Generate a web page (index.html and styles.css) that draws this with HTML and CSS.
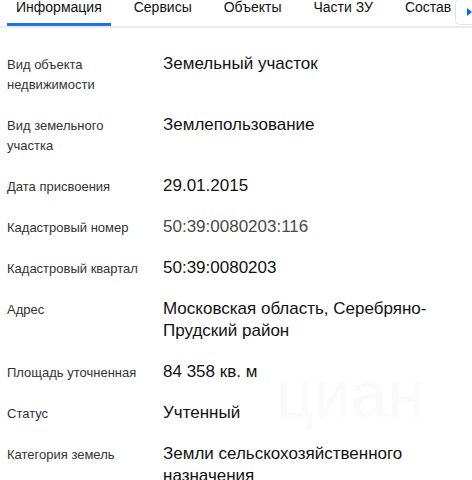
FILE: index.html
```html
<!DOCTYPE html>
<html lang="ru">
<head>
  <meta charset="UTF-8">
  <meta name="viewport" content="width=device-width, initial-scale=1.0">
  <title>Информация об участке</title>
  <link rel="stylesheet" href="styles.css">
</head>
<body>

  <!-- Tabs -->
  <div class="tabs">
    <div class="tab active">Информация</div>
    <div class="tab">Сервисы</div>
    <div class="tab">Объекты</div>
    <div class="tab">Части ЗУ</div>
    <div class="tab">Состав</div>
    <div class="tab-more">
      <svg width="8" height="10" viewBox="0 0 8 10"><path d="M1 1 L6 5 L1 9 Z" fill="#0468ff"/></svg>
    </div>
  </div>

  <!-- Info list -->
  <div class="info">
    <div class="watermark">циан</div>

    <div class="row">
      <div class="label">Вид объекта недвижимости</div>
      <div class="value">Земельный участок</div>
    </div>
    <div class="row">
      <div class="label">Вид земельного участка</div>
      <div class="value">Землепользование</div>
    </div>
    <div class="row">
      <div class="label">Дата присвоения</div>
      <div class="value">29.01.2015</div>
    </div>
    <div class="row">
      <div class="label">Кадастровый номер</div>
      <div class="value muted">50:39:0080203:116</div>
    </div>
    <div class="row">
      <div class="label">Кадастровый квартал</div>
      <div class="value">50:39:0080203</div>
    </div>
    <div class="row">
      <div class="label">Адрес</div>
      <div class="value">Московская область, Серебряно-Прудский район</div>
    </div>
    <div class="row">
      <div class="label">Площадь уточненная</div>
      <div class="value">84 358 кв. м</div>
    </div>
    <div class="row">
      <div class="label">Статус</div>
      <div class="value">Учтенный</div>
    </div>
    <div class="row">
      <div class="label">Категория земель</div>
      <div class="value">Земли сельскохозяйственного назначения</div>
    </div>
  </div>

</body>
</html>
```

FILE: styles.css
```css
/* Page */
body {
  margin: 0;
  background: #fff;
  font-family: 'Liberation Sans', Arial, sans-serif;
  color: #121212;
  overflow: hidden;
}

/* Tab strip */
.tabs {
  display: flex;
  gap: 14px;
  height: 26px;
  padding-left: 7px;
  border-bottom: 2px solid #e9ebee;
  position: relative;
  overflow: hidden;
  white-space: nowrap;
}

.tab {
  padding: 0 9px;
  font-size: 14px;
  line-height: 14px;
  color: #121212;
  border-bottom: 3px solid transparent;
  height: 23px;
}

.tab.active {
  border-bottom-color: #1a73e8;
}

/* Scroll button on the right edge */
.tab-more {
  position: absolute;
  top: -2px;
  left: 455px;
  width: 40px;
  height: 27px;
  background: #fff;
  border: 1px solid #dfe3e8;
  border-radius: 5px;
  display: flex;
  align-items: center;
  padding-left: 10px;
  box-sizing: border-box;
}

/* Info rows */
.info {
  position: relative;
  padding: 25px 10px 0 7px;
}

.row {
  display: flex;
  align-items: baseline;
  margin-bottom: 19px;
}

.label {
  width: 140px;
  flex-shrink: 0;
  font-size: 13px;
  line-height: 20px;
  color: #333;
  padding-right: 16px;
}

.value {
  font-size: 17px;
  line-height: 22px;
  color: #121212;
}

.value.muted {
  color: #4a4a4a;
}

/* Faint watermark behind the list */
.watermark {
  position: absolute;
  left: 276px;
  top: 333px;
  font-size: 66px;
  line-height: 1;
  color: #fafafa;
  z-index: -1;
}
```
